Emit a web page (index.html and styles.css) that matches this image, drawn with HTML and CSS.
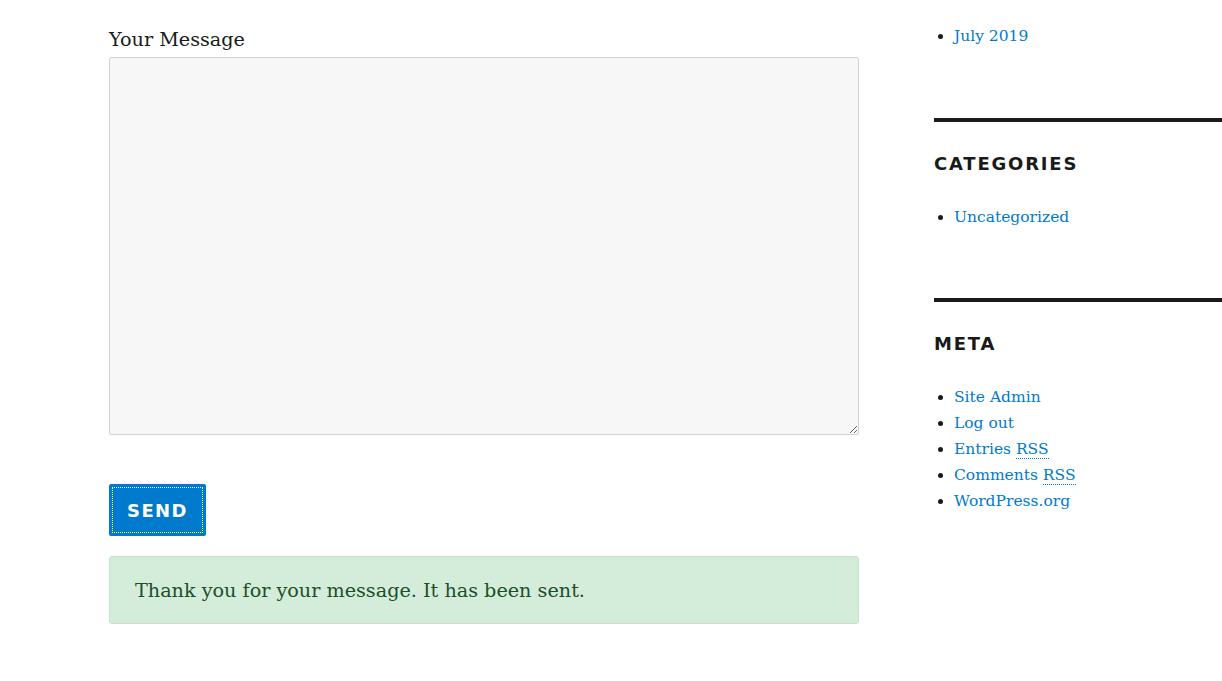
FILE: index.html
```html
<!DOCTYPE html>
<html>
<head>
<meta charset="utf-8">
<link rel="stylesheet" href="styles.css">
</head>
<body>
<div class="page">
  <main class="main">
    <form class="form">
      <label class="label" for="msg">Your Message</label>
      <textarea id="msg" class="textarea"></textarea>
      <div class="actions">
        <button type="button" class="send"><span class="send-inner">Send</span></button>
      </div>
    </form>
    <div class="notice">Thank you for your message. It has been sent.</div>
  </main>
  <aside class="sidebar">
    <ul class="list first">
      <li><a href="#">July 2019</a></li>
    </ul>
    <section class="widget">
      <h2 class="widget-title">Categories</h2>
      <ul class="list">
        <li><a href="#">Uncategorized</a></li>
      </ul>
    </section>
    <section class="widget">
      <h2 class="widget-title">Meta</h2>
      <ul class="list">
        <li><a href="#">Site Admin</a></li>
        <li><a href="#">Log out</a></li>
        <li><a href="#">Entries <abbr class="abbr">RSS</abbr></a></li>
        <li><a href="#">Comments <abbr class="abbr">RSS</abbr></a></li>
        <li><a href="#">WordPress.org</a></li>
      </ul>
    </section>
  </aside>
</div>
</body>
</html>
```

FILE: styles.css
```css
html, body {
  margin: 0;
  padding: 0;
  background: #fff;
  overflow: hidden;
}
body {
  font-family: "DejaVu Serif", "Liberation Serif", serif;
  color: #1a1a1a;
  width: 1222px;
  height: 681px;
}
.page {
  display: flex;
  padding-left: 109px;
  gap: 75px;
}
.main {
  width: 750px;
  flex: none;
  padding-top: 26px;
}
.form {
  display: flex;
  flex-direction: column;
}
.label {
  font-size: 19.2px;
  line-height: 28px;
  margin-bottom: 3px;
  color: #1a1a1a;
}
.textarea {
  box-sizing: border-box;
  width: 750px;
  height: 378px;
  background: #f7f7f7;
  border: 1px solid #d1d1d1;
  border-radius: 2px;
  margin: 0;
  padding: 8px;
  resize: vertical;
  font: inherit;
}
.actions {
  padding-top: 49px;
}
.send {
  width: 97px;
  height: 52px;
  background: #007acc;
  border: none;
  border-radius: 2px;
  padding: 3px;
  display: flex;
  cursor: pointer;
}
.send-inner {
  flex: 1;
  display: flex;
  align-items: center;
  justify-content: center;
  border: 1px dotted #fff;
  color: #fff;
  font-family: "DejaVu Sans", "Liberation Sans", sans-serif;
  font-weight: 700;
  font-size: 18px;
  letter-spacing: 1.4px;
  text-transform: uppercase;
  padding-top: 1px;
}
.notice {
  margin-top: 20px;
  box-sizing: border-box;
  height: 68px;
  background: #d4ecda;
  border: 1px solid #c1e3c9;
  border-radius: 3px;
  display: flex;
  align-items: center;
  padding: 0 25px 0;
  color: #1e4e2a;
  font-size: 19.2px;
}
.sidebar {
  flex: 1;
  min-width: 0;
  padding-top: 23px;
}
.list {
  margin: 0;
  padding: 0 0 0 20px;
  font-size: 15.5px;
  line-height: 26px;
}
.list li {
  color: #1a1a1a;
}
.list a {
  color: #007acc;
  text-decoration: none;
}
.list.first {
  margin-bottom: 69px;
}
.widget {
  border-top: 4px solid #1a1a1a;
  padding-top: 30px;
  margin-bottom: 68px;
}
.widget-title {
  margin: 0 0 28px;
  font-family: "DejaVu Sans", "Liberation Sans", sans-serif;
  font-weight: 700;
  font-size: 18px;
  line-height: 24px;
  letter-spacing: 1.8px;
  text-transform: uppercase;
  color: #1a1a1a;
}
.abbr {
  text-decoration: none;
  border-bottom: 1px dotted #007acc;
}
```
